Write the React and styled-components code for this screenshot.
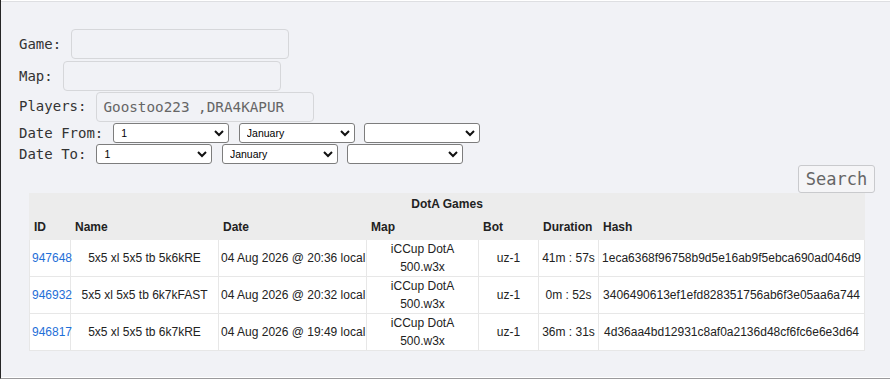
import React from 'react'
import styled, { createGlobalStyle } from 'styled-components'

const GlobalStyle = createGlobalStyle`
  html, body {
    margin: 0;
    padding: 0;
    background: #fff;
  }
  body {
    width: 890px;
    height: 379px;
    overflow: hidden;
  }
`;

const Frame = styled.div`
  box-sizing: border-box;
  width: 890px;
  height: 379px;
  padding: 1px 1px 1px 0;
  border-left: 1px solid #262626;
  border-bottom: 1px solid #9a9a9c;
  background: #fff;
  display: flex;
`;

const Page = styled.div`
  flex: 1;
  box-sizing: border-box;
  background: #f1f2f6;
  border-top: 1px solid #dedfe2;
  padding: 27px 15px 0 18px;
  display: flex;
  flex-direction: column;
`;

// ---- search form ----

const FieldRow = styled.div`
  display: flex;
  align-items: ${p => (p.$top ? 'flex-start' : 'center')};
  height: ${p => p.$h}px;
  flex: 0 0 auto;
`;

const Label = styled.label`
  font-family: "DejaVu Sans Mono", "Liberation Mono", monospace;
  font-size: 14px;
  line-height: ${p => p.$lh || 20}px;
  color: #333;
  white-space: pre;
  margin-right: 10px;
`;

const TextInput = styled.input`
  box-sizing: border-box;
  width: 218px;
  height: 30px;
  border: 1px solid #d6d7da;
  border-radius: 4px;
  background: transparent;
  padding: 0 6px;
  font-family: "DejaVu Sans Mono", "Liberation Mono", monospace;
  font-size: 14.3px;
  color: #666;
  outline: none;
`;

const SelectWrap = styled.span`
  position: relative;
  display: inline-block;
  width: 116px;
  height: 20px;
  margin-left: ${p => (p.$first ? 0 : 9.5)}px;
`;

const Select = styled.select`
  appearance: none;
  box-sizing: border-box;
  width: 100%;
  height: 100%;
  border: 1px solid #7d7d7d;
  border-radius: 3px;
  background: #fff;
  font-family: "Liberation Sans", Arial, sans-serif;
  font-size: 10.5px;
  color: #000;
  padding: 0 20px 0 7px;
  outline: none;
`;

const Chevron = styled.svg`
  position: absolute;
  right: 5px;
  top: 7px;
  pointer-events: none;
`;

const SearchRow = styled.div`
  display: flex;
  justify-content: flex-end;
  height: 28px;
  flex: 0 0 auto;
`;

const SearchButton = styled.button`
  box-sizing: border-box;
  width: 77px;
  height: 28px;
  border: 1px solid #c9cacd;
  border-radius: 3px;
  background: #f5f5f7;
  font-family: "DejaVu Sans Mono", "Liberation Mono", monospace;
  font-size: 17px;
  color: #666;
  padding: 0;
`;

// ---- results table ----

const Games = styled.table`
  margin: 0 10px;
  width: 835px;
  table-layout: fixed;
  border-collapse: collapse;
  font-family: "Liberation Sans", Arial, sans-serif;
  font-size: 12px;
  color: #222;
  background: #fff;
`;

const CaptionCell = styled.th`
  height: 20px;
  padding: 0;
  background: #ececec;
  border: 1px solid #ececec;
  text-align: center;
  font-weight: bold;
`;

const HeadCell = styled.th`
  height: 24px;
  padding: 0 4px;
  background: #ececec;
  border: 1px solid #ececec;
  text-align: left;
  font-weight: bold;
  white-space: nowrap;
`;

const Cell = styled.td`
  height: 36px;
  padding: 0 2px;
  border: 1px solid #e7e7e7;
  line-height: 18px;
  text-align: center;
  vertical-align: middle;
  white-space: ${p => (p.$wrap ? 'normal' : 'nowrap')};
`;

const GameLink = styled.a`
  color: #1f6fd8;
  text-decoration: none;
`;

const days = Array.from({ length: 31 }, (_, i) => String(i + 1));
const months = ['January', 'February', 'March', 'April', 'May', 'June', 'July',
  'August', 'September', 'October', 'November', 'December'];

const columns = [
  { title: 'ID', width: 41 },
  { title: 'Name', width: 148 },
  { title: 'Date', width: 148 },
  { title: 'Map', width: 112 },
  { title: 'Bot', width: 60 },
  { title: 'Duration', width: 60 },
  { title: 'Hash', width: 266 },
];

const games = [
  { id: '947648', name: '5x5 xl 5x5 tb 5k6kRE', date: '04 Aug 2026 @ 20:36 local', map: 'iCCup DotA 500.w3x', bot: 'uz-1', duration: '41m : 57s', hash: '1eca6368f96758b9d5e16ab9f5ebca690ad046d9' },
  { id: '946932', name: '5x5 xl 5x5 tb 6k7kFAST', date: '04 Aug 2026 @ 20:32 local', map: 'iCCup DotA 500.w3x', bot: 'uz-1', duration: '0m : 52s', hash: '3406490613ef1efd828351756ab6f3e05aa6a744' },
  { id: '946817', name: '5x5 xl 5x5 tb 6k7kRE', date: '04 Aug 2026 @ 19:49 local', map: 'iCCup DotA 500.w3x', bot: 'uz-1', duration: '36m : 31s', hash: '4d36aa4bd12931c8af0a2136d48cf6fc6e6e3d64' },
];

const DropDown = ({ options, first }) => (
  <SelectWrap $first={first}>
    <Select defaultValue={options[0]}>
      {options.map(o => <option key={o} value={o}>{o}</option>)}
    </Select>
    <Chevron width="10" height="7" viewBox="0 0 10 7">
      <polyline points="1,1 5,5 9,1" fill="none" stroke="#111" strokeWidth="2" />
    </Chevron>
  </SelectWrap>
);

const DateRow = ({ label }) => (
  <FieldRow $h={21} $top>
    <Label $lh={20}>{label}</Label>
    <DropDown options={days} first />
    <DropDown options={months} />
    <DropDown options={['']} />
  </FieldRow>
);

export default function App() {
  return (
    <>
      <GlobalStyle />
      <Frame>
        <Page>
          <FieldRow $h={32} $top>
            <Label $lh={30}>Game:</Label>
            <TextInput />
          </FieldRow>
          <FieldRow $h={31} $top>
            <Label $lh={30}>Map:</Label>
            <TextInput />
          </FieldRow>
          <FieldRow $h={31} $top>
            <Label $lh={28}>Players:</Label>
            <TextInput defaultValue="Goostoo223 ,DRA4KAPUR" />
          </FieldRow>
          <DateRow label="Date From:" />
          <DateRow label="Date To:" />
          <SearchRow>
            <SearchButton>Search</SearchButton>
          </SearchRow>
          <Games>
            <colgroup>
              {columns.map(c => <col key={c.title} style={{ width: c.width }} />)}
            </colgroup>
            <thead>
              <tr>
                <CaptionCell colSpan={7}>DotA Games</CaptionCell>
              </tr>
              <tr>
                {columns.map(c => <HeadCell key={c.title}>{c.title}</HeadCell>)}
              </tr>
            </thead>
            <tbody>
              {games.map(g => (
                <tr key={g.id}>
                  <Cell><GameLink href="#">{g.id}</GameLink></Cell>
                  <Cell>{g.name}</Cell>
                  <Cell>{g.date}</Cell>
                  <Cell $wrap>{g.map}</Cell>
                  <Cell>{g.bot}</Cell>
                  <Cell>{g.duration}</Cell>
                  <Cell>{g.hash}</Cell>
                </tr>
              ))}
            </tbody>
          </Games>
        </Page>
      </Frame>
    </>
  );
}
